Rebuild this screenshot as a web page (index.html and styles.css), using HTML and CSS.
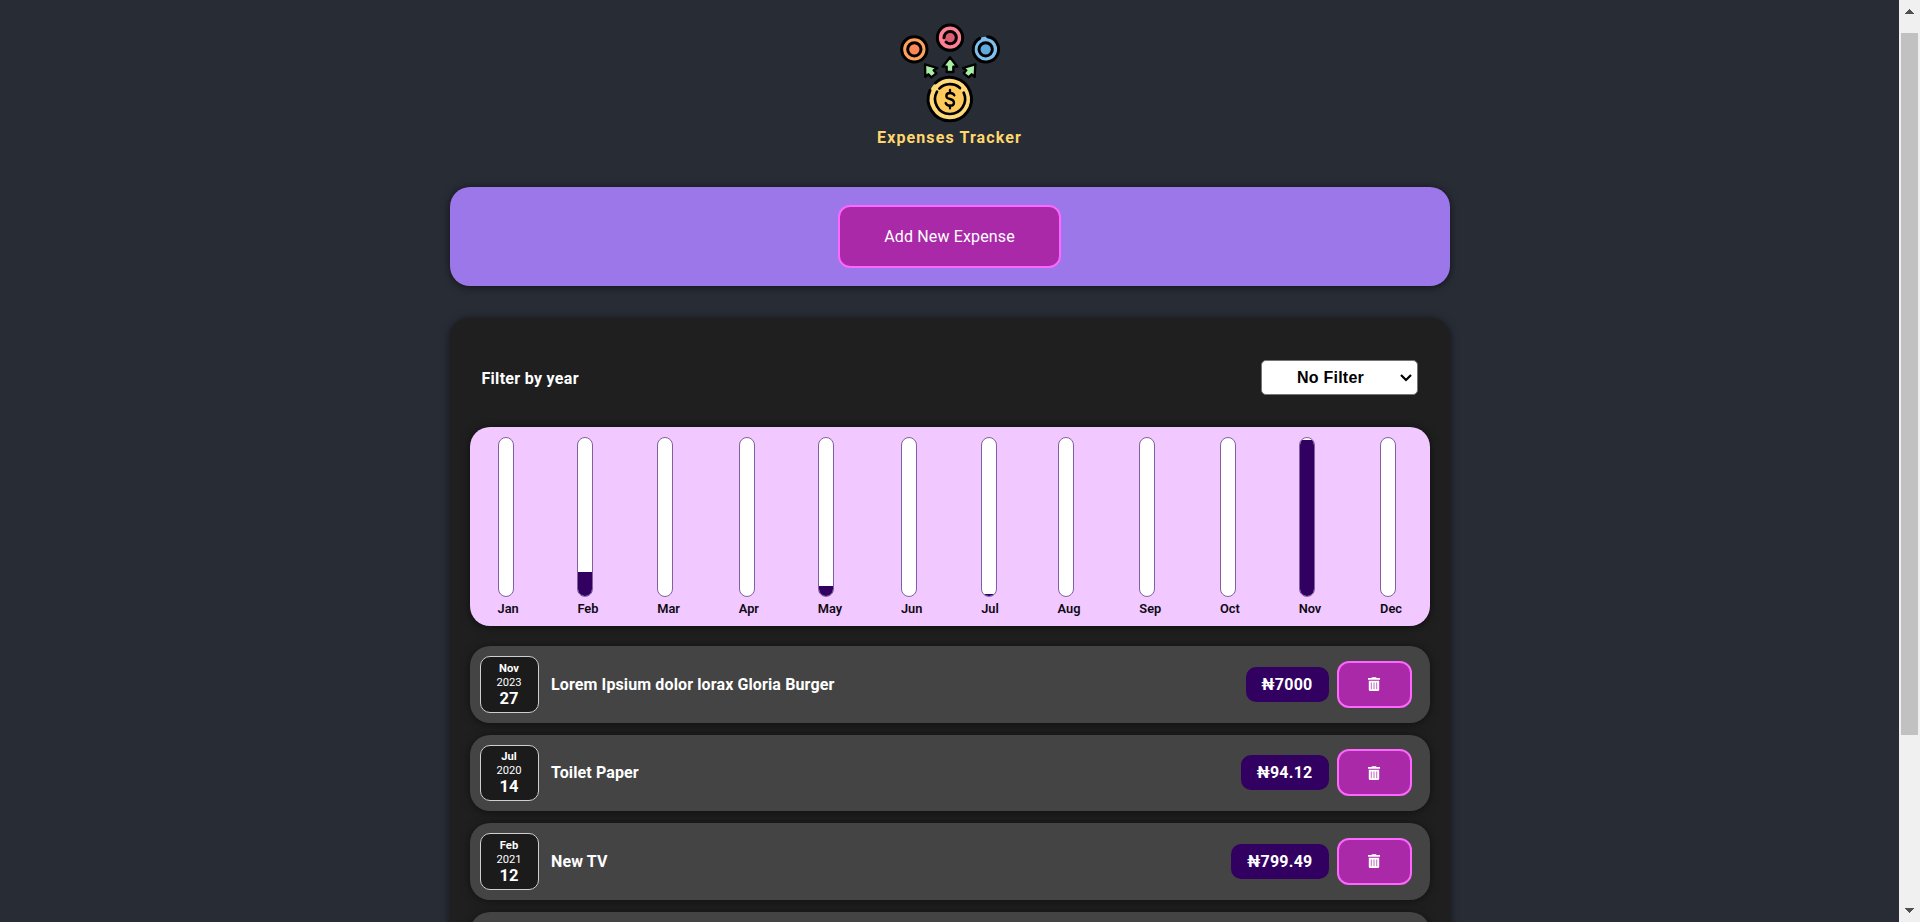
FILE: index.html
```
<!DOCTYPE html>
<html lang="en">
<head>
<meta charset="utf-8">
<title>Expenses Tracker</title>
<link rel="stylesheet" href="styles.css">
</head>
<body>
<svg class="defs" width="0" height="0">
  <symbol id="trash" viewBox="0 0 12 14">
    <path fill="#fff" d="M4 .2h4l.6.8H12v1.8H0V1h3.400zM.8 3.700h10.400v9q0 1.300-1.300 1.300H2.100Q.8 14 .8 12.700z"/>
    <path stroke="#a929a8" stroke-width=".7" d="M3.300 5.500v6.700M6 5.500v6.700M8.700 5.500v6.700"/>
  </symbol>
</svg>
<div class="page">
  <main class="content">
    <header class="brand">
      <svg class="logo" viewBox="117 39 300 300" fill="none" stroke="#000" stroke-width="9" stroke-linecap="round" stroke-linejoin="round">
        <circle cx="163" cy="118" r="38" fill="#ffa35c"/>
        <circle cx="163" cy="118" r="20" fill="#ff8659"/>
        <circle cx="270" cy="83" r="38" fill="#ff7f93"/>
        <path d="M252 83A18.500 18.500 0 1 1 270 101.500Q263 101 258 96" fill="#df5a73"/>
        <circle cx="377" cy="118" r="38" fill="#7dc0f0" stroke="none"/>
        <path d="M383 80.500A38 38 0 1 1 359 85"/>
        <circle cx="377" cy="118" r="20" fill="#60a9dd"/>
        <path d="M270 142L248 170H260V186H280V170H292Z" fill="#a9f0a4" stroke-width="7"/>
        <path d="M195 163L196 201L205 193L214 202L229 190L221 181L232 174Z" fill="#a9f0a4" stroke-width="7"/>
        <path d="M346 163L309 174L319 181L311 190L326 202L335 193L344 201Z" fill="#a9f0a4" stroke-width="7"/>
        <circle cx="270" cy="267" r="65" fill="#ffd978" stroke="none"/>
        <path d="M226 219A65 65 0 1 1 210 241"/>
        <circle cx="270" cy="267" r="43" fill="#ffc95b" stroke="none"/>
        <path d="M238 236A45 45 0 0 1 300 234M311 248A45 45 0 1 1 231 245" stroke-width="8"/>
        <path d="M270 240V249M270 286V295M283 256Q280 249 270 249Q259 249 259 258Q259 265 270 267Q282 270 282 278Q282 287 270 287Q260 287 257 279" stroke-width="7"/>
      </svg>
      <div class="brand-name">Expenses Tracker</div>
    </header>
    <section class="card add-card">
      <button class="btn">Add New Expense</button>
    </section>
    <section class="card list-card">
      <div class="filter">
        <label for="year">Filter by year</label>
        <div class="select">
          <select id="year"><option>No Filter</option><option>2023</option><option>2021</option><option>2020</option></select>
          <svg width="12" height="8" fill="none" stroke="#000" stroke-width="2.200"><path d="M1 1l5 5 5-5"/></svg>
        </div>
      </div>
      <div class="chart">
        <div class="month"><div class="bar"></div>Jan</div>
        <div class="month"><div class="bar"><i style="height:15.4%"></i></div>Feb</div>
        <div class="month"><div class="bar"></div>Mar</div>
        <div class="month"><div class="bar"></div>Apr</div>
        <div class="month"><div class="bar"><i style="height:6.4%"></i></div>May</div>
        <div class="month"><div class="bar"></div>Jun</div>
        <div class="month"><div class="bar"><i style="height:1.3%"></i></div>Jul</div>
        <div class="month"><div class="bar"></div>Aug</div>
        <div class="month"><div class="bar"></div>Sep</div>
        <div class="month"><div class="bar"></div>Oct</div>
        <div class="month"><div class="bar"><i style="height:98.7%"></i></div>Nov</div>
        <div class="month"><div class="bar"></div>Dec</div>
      </div>
      <ul class="items">
        <li class="item">
          <div class="date"><b>Nov</b><span>2023</span><strong>27</strong></div>
          <h2>Lorem Ipsium dolor lorax Gloria Burger</h2>
          <div class="price">₦7000</div>
          <button class="btn delete" aria-label="Delete"><svg class="trash"><use href="#trash"/></svg></button>
        </li>
        <li class="item">
          <div class="date"><b>Jul</b><span>2020</span><strong>14</strong></div>
          <h2>Toilet Paper</h2>
          <div class="price">₦94.12</div>
          <button class="btn delete" aria-label="Delete"><svg class="trash"><use href="#trash"/></svg></button>
        </li>
        <li class="item">
          <div class="date"><b>Feb</b><span>2021</span><strong>12</strong></div>
          <h2>New TV</h2>
          <div class="price">₦799.49</div>
          <button class="btn delete" aria-label="Delete"><svg class="trash"><use href="#trash"/></svg></button>
        </li>
        <li class="item"></li>
      </ul>
    </section>
  </main>
  <aside class="scrollbar">
    <svg width="9" height="5" shape-rendering="crispEdges"><path fill="#505050" d="M4 0h1v1h1v1h1v1h1v1h1v1H0V4h1V3h1V2h1V1h1z"/></svg>
    <div class="track"><div class="thumb"></div></div>
    <svg width="9" height="5" shape-rendering="crispEdges"><path fill="#505050" d="M0 0h9v1H8v1H7v1H6v1H5v1H4V4H3V3H2V2H1V1H0z"/></svg>
  </aside>
</div>
</body>
</html>
```
FILE: styles.css
```
* { box-sizing: border-box; }
body { margin: 0; font-family: Roboto, "Liberation Sans", sans-serif; font-size: 16px; color: #fff; background: #282c35; overflow: hidden; }
.defs { display: block; }
.page { display: flex; height: 922px; overflow: hidden; }
.content { flex: 1; display: flex; flex-direction: column; align-items: center; padding-top: 23px; }
.brand { display: flex; flex-direction: column; align-items: center; height: 164px; flex: none; }
.logo { width: 100px; height: 100px; overflow: visible; }
.brand-name { margin-top: 5px; line-height: 19px; font-weight: 700; letter-spacing: 1.1px; color: #ffd76e; }
.card { width: 1000px; flex: none; border-radius: 20px; box-shadow: 0 1px 8px rgba(0, 0, 0, .6); }
.add-card { height: 99px; background: #9b77ea; display: flex; align-items: center; justify-content: center; }
.btn { font: 400 16px Roboto, sans-serif; letter-spacing: .15px; color: #fff; background: #a929a8; border: 2px solid #ff66ff; border-radius: 12px; padding: 0; width: 223px; height: 63px; }
.list-card { margin-top: 32px; background: #1f1f1f; padding: 42px 20px 20px; height: 800px; }
.filter { display: flex; justify-content: space-between; align-items: center; height: 35px; padding: 0 12px; margin-bottom: 32px; font-weight: 700; letter-spacing: .3px; }
.filter label { padding-top: 2px; }
.select { position: relative; }
.select select { display: block; appearance: none; width: 157px; height: 35px; padding: 0 17px 0 0; letter-spacing: .25px; font: 700 16px "Liberation Sans", Arial, sans-serif; text-align: center; background: #fff; color: #000; border: 1px solid #767676; border-radius: 5px; }
.select svg { position: absolute; right: 6px; top: 14px; }
.chart { display: flex; justify-content: space-between; height: 199px; padding: 10px 27.500px 0 28px; border-radius: 20px; background: #f1c8ff; box-shadow: 0 1px 8px rgba(0, 0, 0, .6); color: #0e0a12; font-size: 12.8px; font-weight: 600; line-height: 15px; }
.bar { width: 16px; height: 160px; border: 1px solid #8260a0; border-radius: 12px; background: #fff; overflow: hidden; display: flex; flex-direction: column; justify-content: flex-end; margin-bottom: 4px; }
.bar i { background: #310061; }
.items { list-style: none; margin: 20px 0 0; padding: 0; display: flex; flex-direction: column; gap: 12px; }
.item { display: flex; align-items: center; height: 76.6px; padding: 10px 18px 10px 10px; background: #444; border-radius: 20px; box-shadow: 0 1px 8px rgba(0, 0, 0, .5); }
.date { width: 59px; height: 56.600px; display: flex; flex-direction: column; align-items: center; padding-top: 4.600px; background: #1b1b1b; border: 1px solid #cfcfcf; border-radius: 10px; font-size: 11.200px; line-height: 14px; }
.date strong { font-size: 16.500px; line-height: 17px; }
.item h2 { flex: 1; margin: 0 0 0 12.500px; font-size: 16px; line-height: 19px; letter-spacing: .12px; }
.price { height: 35px; padding: 0 16px; line-height: 35px; border-radius: 10px; background: #310061; font-weight: 700; letter-spacing: .24px; }
.delete { width: 75px; height: 47px; margin-left: 8px; display: flex; align-items: center; justify-content: center; }
.trash { width: 12px; height: 14px; }
.scrollbar { width: 21px; flex: none; background: #f0f0f0; display: flex; flex-direction: column; align-items: center; padding: 9px 0; }
.track { flex: 1; width: 17px; padding-top: 19px; }
.thumb { height: 702px; background: #c1c1c1; }
```
